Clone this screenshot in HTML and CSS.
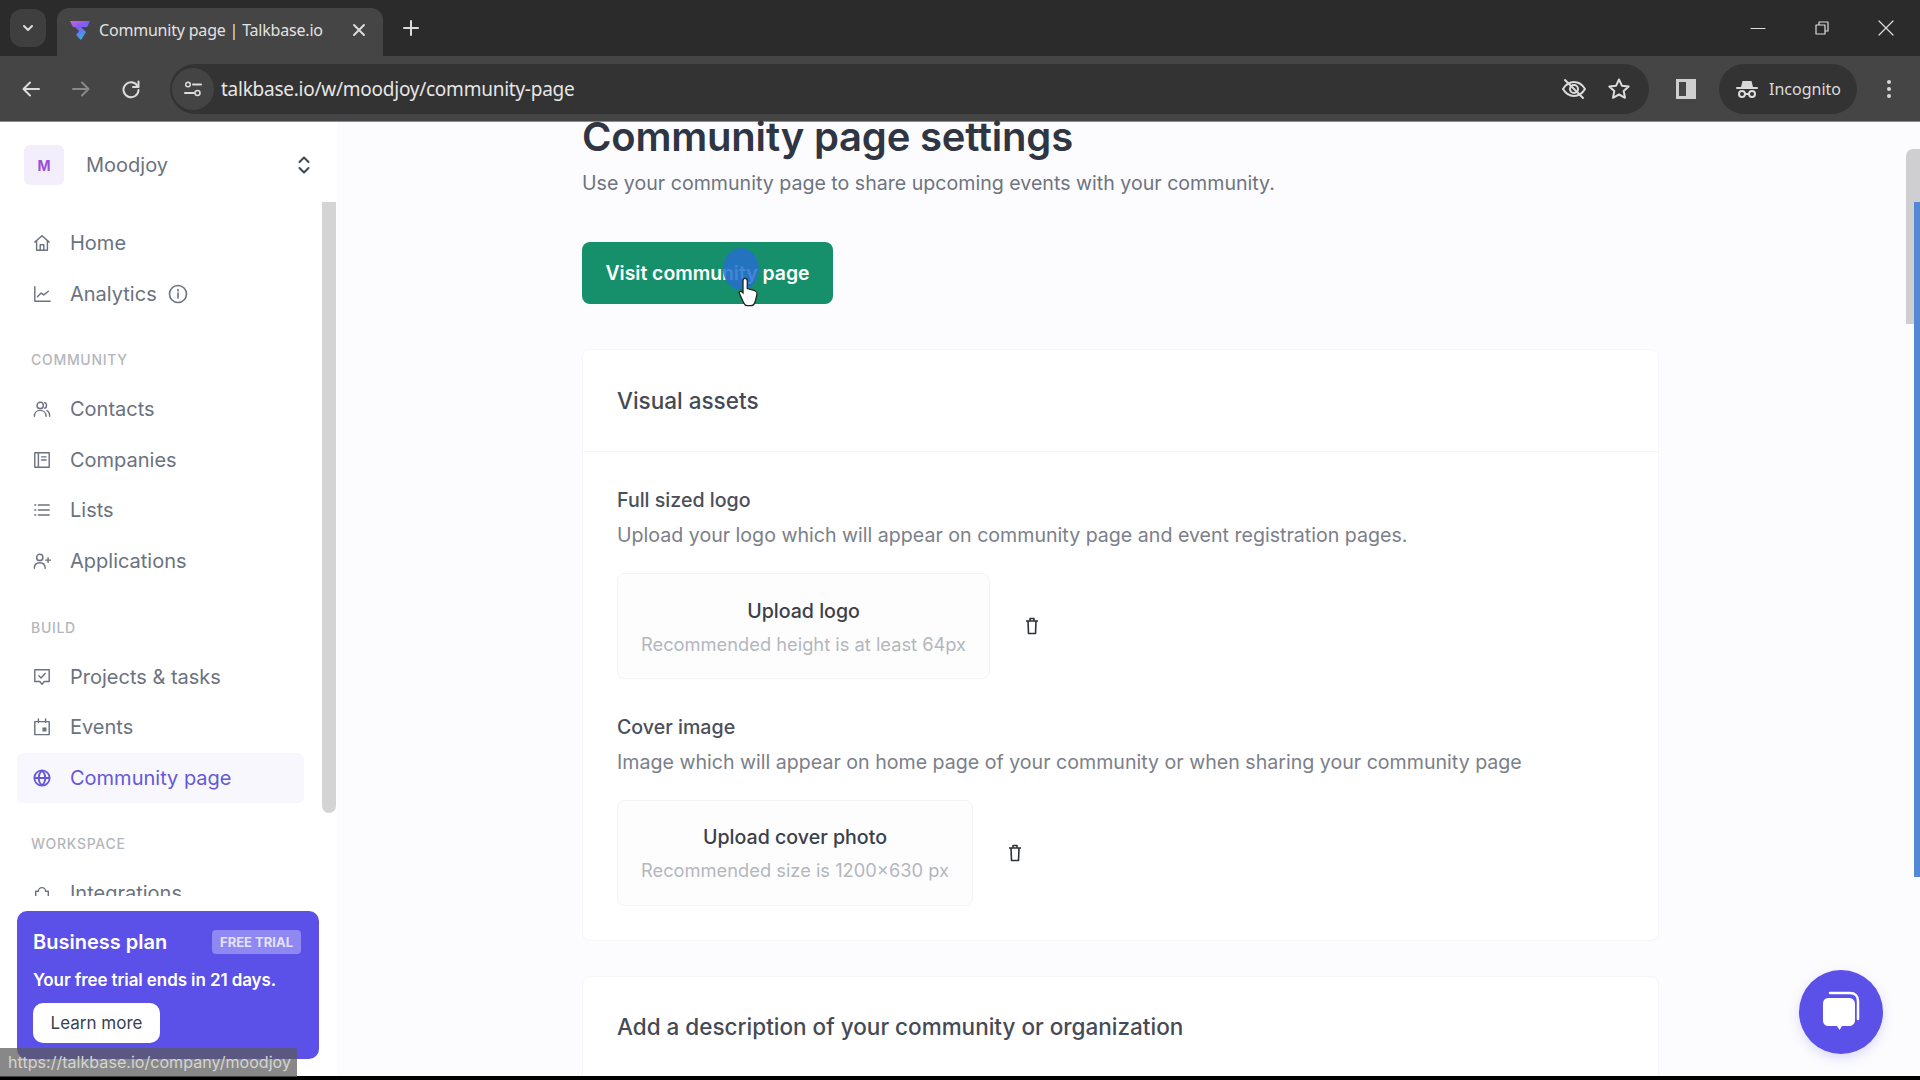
FILE: index.html
```html
<!DOCTYPE html>
<html lang="en">
<head>
<meta charset="utf-8">
<title>Community page | Talkbase.io</title>
<link rel="stylesheet" href="styles.css">
</head>
<body>
<div class="window">
  <header class="tabstrip">
    <button class="tab-search"><svg width="14" height="14" viewBox="0 0 14 14"><path d="M3 5l4 4 4-4" class="st2"/></svg></button>
    <div class="tab">
      <svg class="favicon" width="24" height="24" viewBox="0 0 24 24"><defs><linearGradient id="fav" x1="0" y1="0" x2="0.6" y2="1"><stop offset="0" stop-color="#d65fe0"/><stop offset=".45" stop-color="#7d5cf0"/><stop offset="1" stop-color="#2fb6e6"/></linearGradient></defs><path d="M2 3h20l-3 6h-6l5 5-5 8-5-5 3-4-4-4H5z" fill="url(#fav)"/></svg>
      <span class="tab-title">Community page | Talkbase.io</span>
      <svg class="tab-close" width="14" height="14" viewBox="0 0 14 14"><path d="M2 2l10 10M12 2L2 12" class="st2"/></svg>
    </div>
    <svg class="tab-new" width="16" height="16" viewBox="0 0 16 16"><path d="M8 1v14M1 8h14" class="st2"/></svg>
    <div class="win-controls">
      <svg width="16" height="16" viewBox="0 0 16 16"><path d="M1 8.500h14" class="st1"/></svg>
      <svg width="16" height="16" viewBox="0 0 16 16"><path d="M2 5h9v9H2zM5 5V2h9v9h-3" class="st1"/></svg>
      <svg width="18" height="18" viewBox="0 0 18 18"><path d="M2 2l14 14M16 2L2 16" class="st1"/></svg>
    </div>
  </header>
  <nav class="toolbar">
    <svg class="tb-icon" width="20" height="20" viewBox="0 0 20 20"><path d="M18 10H3M9 3.500L2.500 10 9 16.500" class="st2"/></svg>
    <svg class="tb-icon dim" width="20" height="20" viewBox="0 0 20 20"><path d="M2 10h15M11 3.500L17.500 10 11 16.500" class="st2"/></svg>
    <svg class="tb-icon" width="20" height="20" viewBox="0 0 20 20"><path d="M16.500 7A7.500 7.500 0 1 0 17.500 11" class="st2"/><path d="M17.500 2.500V8h-5.500" class="st2"/></svg>
    <div class="omnibox">
      <span class="site-btn"><svg width="20" height="20" viewBox="0 0 20 20"><circle cx="5" cy="5.500" r="2.300" class="st15"/><path d="M10 5.500h8M2 14h9" class="st2"/><circle cx="14.500" cy="14" r="2.500" class="st15"/></svg></span>
      <span class="url">talkbase.io/w/moodjoy/community-page</span>
      <svg class="omni-eye" width="26" height="26" viewBox="0 0 26 26"><path d="M2 13c3-5 7-7 11-7s8 2 11 7c-3 5-7 7-11 7s-8-2-11-7z" class="st2"/><circle cx="13" cy="13" r="4" class="st2"/><path d="M4 4l18 18" class="st2b"/></svg>
      <svg class="omni-star" width="24" height="24" viewBox="0 0 24 24"><path d="M12 2.500l2.900 6.200 6.800.8-5 4.600 1.300 6.700-6-3.300-6 3.300 1.300-6.700-5-4.600 6.800-.8z" class="st2b"/></svg>
    </div>
    <svg class="panel" width="20" height="20" viewBox="0 0 20 20"><path d="M0 0h20v20H0z" fill="#cfcfcf"/><path d="M3 3h7v14H3z" fill="#454545"/></svg>
    <div class="incognito">
      <svg width="22" height="22" viewBox="0 0 22 22"><path d="M5 9l1.500-6h9L17 9z" fill="#d8d8d8"/><path d="M1 10h20" class="st2"/><circle cx="6" cy="16" r="3" class="st2"/><circle cx="16" cy="16" r="3" class="st2"/><path d="M9 16h4" class="st2"/></svg>
      <span>Incognito</span>
    </div>
    <svg class="kebab" width="6" height="20" viewBox="0 0 6 20"><circle cx="3" cy="3" r="2" fill="#d8d8d8"/><circle cx="3" cy="10" r="2" fill="#d8d8d8"/><circle cx="3" cy="17" r="2" fill="#d8d8d8"/></svg>
  </nav>

  <div class="app">
    <aside class="sidebar">
      <div class="workspace">
        <span class="avatar">M</span>
        <span class="ws-name">Moodjoy</span>
        <svg width="14" height="20" viewBox="0 0 14 20"><path d="M2.500 7L7 2.500 11.500 7M2.500 13L7 17.500 11.500 13" class="ic-dark"/></svg>
      </div>
      <div class="nav-scroll">
        <a class="nav-item"><svg class="nav-ic" viewBox="0 0 20 20"><path d="M2 9l8-7 8 7M4 7.500V18h12V7.500M8 18v-6h4v6" class="ic"/></svg>Home</a>
        <a class="nav-item"><svg class="nav-ic" viewBox="0 0 20 20"><path d="M2 2v16h17M5 13l4-4 3 2 5-4" class="ic"/></svg>Analytics<svg class="info" viewBox="0 0 20 20"><circle cx="10" cy="10" r="8.500" class="ic"/><path d="M10 9v5M10 5.500v1.500" class="ic"/></svg></a>
        <div class="nav-label">COMMUNITY</div>
        <a class="nav-item"><svg class="nav-ic" viewBox="0 0 20 20"><circle cx="8" cy="6" r="3.500" class="ic"/><path d="M1.500 18c0-4 3-6.500 6.500-6.500s6.500 2.500 6.500 6.500M13 2.800a3.500 3.500 0 0 1 0 6.400M15.500 11.800c2 1 3 3.200 3 6.200" class="ic"/></svg>Contacts</a>
        <a class="nav-item"><svg class="nav-ic" viewBox="0 0 20 20"><path d="M2 2h16v16H2zM6 2v16M9.500 6.500h5M9.500 10h5" class="ic"/></svg>Companies</a>
        <a class="nav-item"><svg class="nav-ic" viewBox="0 0 20 20"><path d="M6 4.500h12M6 10h12M6 15.500h12M2 4.500h1M2 10h1M2 15.500h1" class="ic"/></svg>Lists</a>
        <a class="nav-item"><svg class="nav-ic" viewBox="0 0 20 20"><circle cx="7.500" cy="6" r="3.500" class="ic"/><path d="M1.500 18c0-4 2.500-6 6-6s6 2 6 6M14 9h5.500M16.750 6.300v5.400" class="ic"/></svg>Applications</a>
        <div class="nav-label">BUILD</div>
        <a class="nav-item"><svg class="nav-ic" viewBox="0 0 20 20"><path d="M2 2h16v13h-5.500L10 18l-2.500-3H2zM6.500 8.500l2.500 2.500 4.500-5" class="ic"/></svg>Projects &amp; tasks</a>
        <a class="nav-item"><svg class="nav-ic" viewBox="0 0 20 20"><path d="M2 4h16v14.500H2zM6 1v4M14 1v4" class="ic"/><path d="M10.500 10.500h4.500v4.500h-4.500z" fill="#6b7280"/></svg>Events</a>
        <a class="nav-item active"><svg class="nav-ic" viewBox="0 0 20 20"><circle cx="10" cy="10" r="8.500" class="ic-a"/><path d="M1.500 10h17M10 1.500c-5 5-5 12 0 17M10 1.500c5 5 5 12 0 17" class="ic-a"/></svg>Community page</a>
        <div class="nav-label">WORKSPACE</div>
        <a class="nav-item"><svg class="nav-ic" viewBox="0 0 20 20"><path d="M3 14V8h3a4 4 0 0 1 8 0h3v6" class="ic"/></svg>Integrations</a>
      </div>
      <section class="promo">
        <div class="promo-top"><strong>Business plan</strong><span class="badge">FREE TRIAL</span></div>
        <p>Your free trial ends in 21 days.</p>
        <button class="learn">Learn more</button>
      </section>
    </aside>

    <main class="content">
      <div class="column">
        <h1>Community page settings</h1>
        <p class="lead">Use your community page to share upcoming events with your community.</p>
        <a class="cta">Visit community page</a>
        <section class="card">
          <h2 class="card-head">Visual assets</h2>
          <div class="card-body">
            <h3>Full sized logo</h3>
            <p class="desc">Upload your logo which will appear on community page and event registration pages.</p>
            <div class="upload-row">
              <div class="upload"><b>Upload logo</b><small>Recommended height is at least 64px</small></div>
              <svg class="trash" viewBox="0 0 14 18"><path d="M1 4h12M3 4l.5 12.500h7L11 4M5 4V1.500h4V4" class="tr"/></svg>
            </div>
            <h3>Cover image</h3>
            <p class="desc">Image which will appear on home page of your community or when sharing your community page</p>
            <div class="upload-row">
              <div class="upload"><b>Upload cover photo</b><small>Recommended size is 1200×630 px</small></div>
              <svg class="trash" viewBox="0 0 14 18"><path d="M1 4h12M3 4l.5 12.500h7L11 4M5 4V1.500h4V4" class="tr"/></svg>
            </div>
          </div>
        </section>
        <section class="card">
          <h2 class="card-head">Add a description of your community or organization</h2>
        </section>
      </div>
    </main>
  </div>
  <div class="bottom-edge"></div>

  <div class="scroll-side"></div>
  <div class="scroll-main"></div>
  <div class="scroll-line"></div>
  <div class="status">https://talkbase.io/company/moodjoy</div>
  <div class="pointer">
    <svg width="24" height="32" viewBox="0 0 28 36"><path d="M9 2c2 0 3 1 3 3v9l8 2c3 1 4 2 3 6l-2 8c-1 3-2 4-5 4h-4c-2 0-3-1-4-3L3 20c-1-2 1-4 3-2l1 1V5c0-2 1-3 2-3z" fill="#fff" stroke="#222" stroke-width="1.500"/></svg>
  </div>
  <button class="chat" aria-label="Chat">
    <svg width="46" height="46" viewBox="0 0 46 46"><path d="M12 4h20c5 0 8 3 8 8v18" fill="none" stroke="#fff" stroke-width="2.500" stroke-linecap="round"/><path d="M11 9h20c4 0 6 3 6 6v16c0 4-3 6-6 6h-7l-2.500 4-2.500-4h-8c-4 0-6-2-6-6V15c0-4 2-6 6-6z" fill="#fff"/></svg>
  </button>
</div>
</body>
</html>
```
FILE: styles.css
```css
* { box-sizing: border-box; }
html, body { margin: 0; height: 100%; overflow: hidden; }
body { font-family: Inter, "Noto Sans", sans-serif; background: #000; }
h1, h2, h3, p { margin: 0; }
button { font: inherit; border: 0; padding: 0; }
svg { flex: none; display: block; }

.st1, .st2, .st2b, .st15 { fill: none; stroke: #dcdcdc; stroke-linecap: round; stroke-linejoin: round; }
.st1 { stroke-width: 1.2; }
.st15 { stroke-width: 1.5; }
.st2 { stroke-width: 2; }
.st2b { stroke-width: 2; }
.ic { fill: none; stroke: #6b7280; stroke-width: 1.6; stroke-linecap: round; stroke-linejoin: round; }
.ic-dark { fill: none; stroke: #3f4550; stroke-width: 2; stroke-linecap: round; stroke-linejoin: round; }
.ic-a { fill: none; stroke: #6558d8; stroke-width: 2; }
.tr { fill: none; stroke: #2e3238; stroke-width: 1.6; stroke-linejoin: round; }

.window { position: relative; width: 1920px; height: 1080px; display: flex; flex-direction: column; }

.tabstrip { height: 56px; background: #2b2b2b; display: flex; align-items: flex-end; padding-left: 10px; }
.tab-search { width: 36px; height: 38px; margin-bottom: 9px; border-radius: 12px; background: #3f3f3f; display: flex; align-items: center; justify-content: center; }
.tab { width: 326px; height: 48px; margin-left: 11px; padding: 0 17px 4px 11px; border-radius: 12px 12px 0 0; background: #454545; display: flex; align-items: center; }
.favicon { margin-right: 7px; }
.tab-title { flex: 1; font: 16px "Noto Sans", sans-serif; color: #e2e2e2; white-space: nowrap; letter-spacing: -.2px; }
.tab-new { margin: 0 0 20px 20px; }
.win-controls { margin-left: auto; height: 56px; width: 190px; padding: 0 25px 0 20px; display: flex; align-items: center; justify-content: space-between; }

.toolbar { height: 66px; background: #454545; border-bottom: 1px solid #8a8a8a; display: flex; align-items: center; padding-left: 21px; }
.tb-icon { margin-right: 30px; }
.tb-icon.dim { opacity: .45; }
.tb-icon:nth-child(3) { margin-right: 29px; }
.omnibox { width: 1479px; height: 50px; border-radius: 25px; background: #333; display: flex; align-items: center; padding: 0 18px 0 2px; }
.site-btn { width: 42px; height: 42px; border-radius: 50%; background: #444; display: flex; align-items: center; justify-content: center; }
.url { flex: 1; margin-left: 7px; font: 19px "Noto Sans", sans-serif; color: #e6e6e6; letter-spacing: -.25px; }
.omni-eye { margin-right: 20px; }
.panel { margin-left: 27px; }
.incognito { margin-left: 23px; width: 138px; height: 50px; border-radius: 25px; background: #333; display: flex; align-items: center; gap: 11px; padding-left: 17px; font: 16px "Noto Sans", sans-serif; color: #dcdcdc; }
.kebab { margin-left: 29px; }

.app { flex: 1; min-height: 0; display: flex; background: #fcfcfe; }
.sidebar { width: 337px; flex: none; background: #fff; display: flex; flex-direction: column; overflow: hidden; }
.workspace { height: 72px; flex: none; padding: 0 24px; display: flex; align-items: center; margin-top: 7px; }
.avatar { width: 40px; height: 40px; border-radius: 6px; background: #f3eefb; color: #9b4fd8; font-size: 14px; font-weight: 700; display: flex; align-items: center; justify-content: center; }
.ws-name { flex: 1; margin-left: 22px; font-size: 20px; color: #6b7280; }
.workspace svg { margin-right: 2px; }

.nav-scroll { height: 695px; flex: none; overflow: hidden; padding-top: 17px; }
.nav-item { width: 287px; height: 50px; margin: 0 0 .6px 17px; padding-left: 16px; border-radius: 6px; display: flex; align-items: center; font-size: 20px; color: #6b7280; white-space: nowrap; }
.nav-item.active { background: #f8f7fe; color: #6558d8; }
.nav-ic { width: 18px; height: 18px; margin-right: 19px; }
.info { width: 20px; height: 20px; margin-left: 11px; }
.nav-label { height: 65px; padding: 31px 0 0 31px; font-size: 14px; font-weight: 500; letter-spacing: .7px; color: #b4b6bb; line-height: 20px; }

.promo { margin: 15px 18px 0 17px; height: 148px; flex: none; border-radius: 10px; background: #5b50e8; padding: 19px 18px 0 16px; color: #fff; }
.promo-top { display: flex; justify-content: space-between; align-items: center; font-size: 20px; }
.promo-top strong { font-weight: 600; }
.badge { width: 89px; height: 24px; border-radius: 4px; background: #8f87f2; font-size: 13px; font-weight: 700; display: flex; align-items: center; justify-content: center; color: #e4e2fc; }
.promo p { margin-top: 14px; font-size: 17px; font-weight: 600; line-height: 24px; letter-spacing: -.1px; white-space: nowrap; }
.learn { display: block; margin-top: 11px; width: 127px; height: 40px; border-radius: 10px; background: #fff; color: #374151; font-size: 17px; }

.content { flex: 1; min-width: 0; padding-left: 245px; }
.column { width: 1077px; }
h1 { font-size: 40px; line-height: 30px; font-weight: 600; color: #2f3542; letter-spacing: -.2px; white-space: nowrap; }
.lead { margin-top: 17px; font-size: 19.600px; line-height: 28px; color: #6e7480; }
.cta { margin-top: 45px; width: 251px; height: 62px; border-radius: 8px; background: #16906b; color: #fff; font-size: 19.400px; font-weight: 600; display: flex; align-items: center; justify-content: center; }
.card { margin-top: 45px; background: #fff; border: 1px solid #f6f6f8; border-radius: 8px; }
.card + .card { margin-top: 35px; height: 120px; }
.card-head { height: 102px; padding-left: 34px; display: flex; align-items: center; font-size: 22.500px; font-weight: 500; color: #454a55; border-bottom: 1px solid #f4f4f6; }
.card + .card .card-head { height: 100px; }
.card-body { padding: 35px 34px 34px; }
h3 { font-size: 19.600px; line-height: 26px; font-weight: 500; color: #4a4f59; white-space: nowrap; }
.desc { margin-top: 8px; font-size: 19.600px; line-height: 28px; color: #7b808a; white-space: nowrap; }
.upload-row { margin: 24px 0 34.500px; display: flex; align-items: center; gap: 35px; }
.upload-row:last-child { margin-bottom: 0; }
.upload { height: 106px; padding: 1px 23px 0; border: 1px solid #f3f3f6; border-radius: 8px; background: #fdfdfe; display: flex; flex-direction: column; align-items: center; justify-content: center; gap: 8px; }
.upload b { font-size: 19.600px; line-height: 26px; font-weight: 500; color: #3a404b; }
.upload small { font-size: 18.300px; line-height: 24px; color: #b4b7bd; }
.trash { width: 14px; height: 18px; }

.bottom-edge { position: relative; height: 4px; flex: none; background: #000; }
.scroll-side { position: absolute; left: 322px; top: 202px; width: 14px; height: 611px; border-radius: 0 0 7px 7px; background: #d4d4d4; }
.scroll-main { position: absolute; left: 1906px; top: 149px; width: 14px; height: 175px; border-radius: 7px 0 0 0; background: #cfcfd1; }
.scroll-line { position: absolute; left: 1914px; top: 202px; width: 6px; height: 675px; background: #5588d4; }
.status { position: absolute; left: 0; top: 1048px; width: 297px; height: 29px; padding-left: 8px; background: rgba(90,90,90,.72); border-top-right-radius: 3px; color: #d4d4d4; font-size: 16.100px; line-height: 29px; white-space: nowrap; }
.pointer { position: absolute; left: 727px; top: 264px; width: 44px; height: 44px; display: flex; align-items: flex-end; justify-content: center; }
.pointer::before { content: ""; position: absolute; left: -4px; top: -16px; width: 36px; height: 42px; border-radius: 50%; background: rgba(38,110,205,.85); }
.pointer svg { position: relative; }
.chat { position: absolute; left: 1799px; top: 970px; width: 84px; height: 84px; border-radius: 50%; background: #5b50e8; box-shadow: 0 4px 12px rgba(91,80,232,.2); display: flex; align-items: center; justify-content: center; }
```
